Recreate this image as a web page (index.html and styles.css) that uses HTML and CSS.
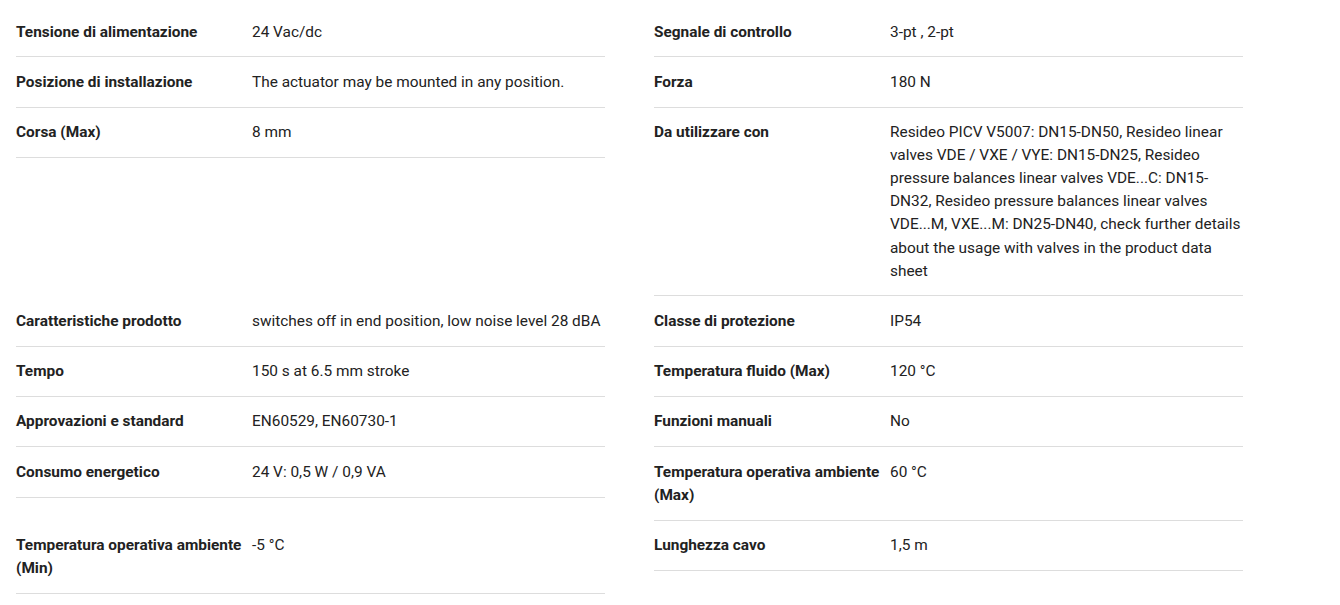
FILE: index.html
```html
<!DOCTYPE html>
<html lang="it">
<head>
  <meta charset="UTF-8" />
  <title>Specifiche tecniche</title>
  <meta name="viewport" content="width=device-width, initial-scale=1" />
  <link rel="stylesheet" href="styles.css">
</head>
<body>

<main class="specs">
  <div class="spec"><div class="label">Tensione di alimentazione</div><div class="value">24 Vac/dc</div></div>
  <div class="spec"><div class="label">Segnale di controllo</div><div class="value">3-pt , 2-pt</div></div>

  <div class="spec"><div class="label">Posizione di installazione</div><div class="value">The actuator may be mounted in any position.</div></div>
  <div class="spec"><div class="label">Forza</div><div class="value">180 N</div></div>

  <div class="spec"><div class="label">Corsa (Max)</div><div class="value">8 mm</div></div>
  <div class="spec"><div class="label">Da utilizzare con</div><div class="value">Resideo PICV V5007: DN15-DN50, Resideo linear valves VDE / VXE / VYE: DN15-DN25, Resideo pressure balances linear valves VDE...C: DN15-DN32, Resideo pressure balances linear valves VDE...M, VXE...M: DN25-DN40, check further details about the usage with valves in the product data sheet</div></div>

  <div class="spec"><div class="label">Caratteristiche prodotto</div><div class="value">switches off in end position, low noise level 28 dBA</div></div>
  <div class="spec"><div class="label">Classe di protezione</div><div class="value">IP54</div></div>

  <div class="spec"><div class="label">Tempo</div><div class="value">150 s at 6.5 mm stroke</div></div>
  <div class="spec"><div class="label">Temperatura fluido (Max)</div><div class="value">120 °C</div></div>

  <div class="spec"><div class="label">Approvazioni e standard</div><div class="value">EN60529, EN60730-1</div></div>
  <div class="spec"><div class="label">Funzioni manuali</div><div class="value">No</div></div>

  <div class="spec"><div class="label">Consumo energetico</div><div class="value">24 V: 0,5 W / 0,9 VA</div></div>
  <div class="spec"><div class="label">Temperatura operativa ambiente (Max)</div><div class="value">60 °C</div></div>

  <div class="spec"><div class="label">Temperatura operativa ambiente (Min)</div><div class="value">-5 °C</div></div>
  <div class="spec"><div class="label">Lunghezza cavo</div><div class="value">1,5 m</div></div>
</main>

</body>
</html>
```

FILE: styles.css
```css
body {
  font-family: Roboto, 'Liberation Sans', sans-serif;
  font-size: 15.4px;
  line-height: 23.1px;
  color: #222;
  background: #fff;
  margin: 0;
  padding: 7px 0 0 16px;
}

.specs {
  display: grid;
  grid-template-columns: 589px 589px;
  column-gap: 49px;
  align-items: start;
}

.spec {
  display: grid;
  grid-template-columns: 236px 1fr;
  padding: 13.5px 0 12.7px;
  border-bottom: 1px solid #ddd;
}

.label {
  font-weight: 700;
  padding-right: 4px;
}
```
